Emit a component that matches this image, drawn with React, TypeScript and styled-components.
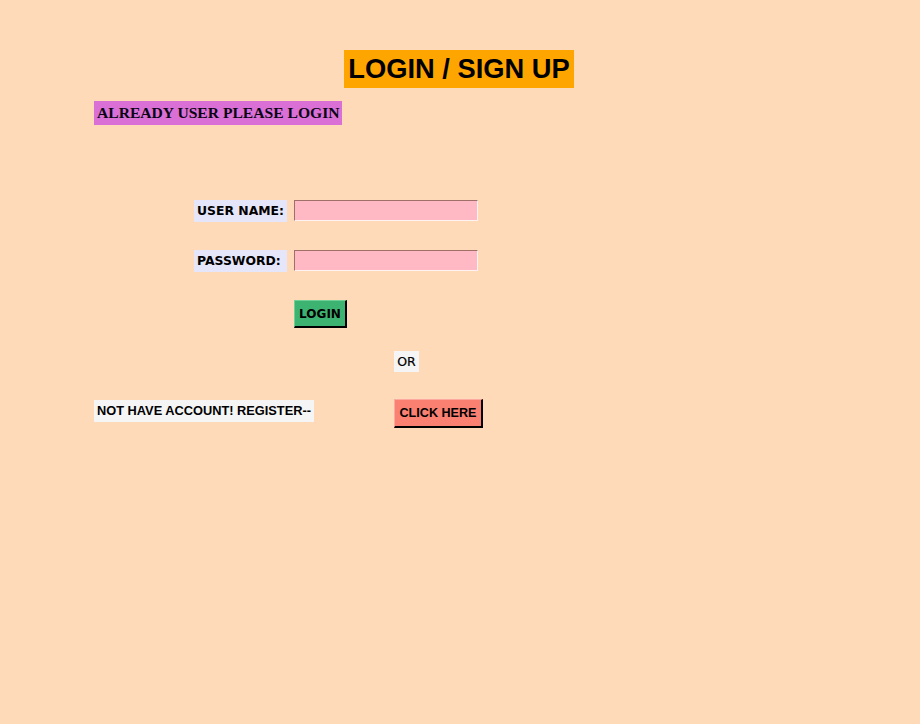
import React from "react";
import styled, { createGlobalStyle } from "styled-components";

const GlobalStyle = createGlobalStyle`
  html, body {
    margin: 0;
    padding: 0;
    background: #ffdab9;
  }
  #root {
    min-height: 100vh;
  }
`;

const Page = styled.div`
  min-height: 724px;
  background: #ffdab9;
  padding-top: 50px;
  box-sizing: border-box;
`;

const TitleRow = styled.div`
  display: flex;
  justify-content: center;
`;

const Title = styled.h1`
  margin: 0;
  background: #ffa500;
  color: #000;
  font-family: "Liberation Sans", Arial, sans-serif;
  font-weight: bold;
  font-size: 27.3px;
  line-height: 38px;
  height: 38px;
  padding: 0 4px;
  transform: translateX(-1px);
`;

const SubTitle = styled.h3`
  margin: 13px 0 0 94px;
  display: inline-block;
  background: #da70d6;
  color: #0a0514;
  font-family: "Liberation Serif", "Times New Roman", serif;
  font-weight: bold;
  font-size: 15.6px;
  line-height: 24px;
  height: 24px;
  padding: 0 3px;
`;

const FormGrid = styled.form`
  display: grid;
  grid-template-columns: 287px auto;
  column-gap: 7px;
  row-gap: 28px;
  margin-top: 75px;
  align-items: start;
  justify-items: start;
`;

const Label = styled.label`
  justify-self: end;
  background: #e6e6fa;
  color: #000;
  font-family: "DejaVu Sans", Verdana, sans-serif;
  font-weight: bold;
  font-size: 12.4px;
  line-height: 22px;
  height: 22px;
  padding: 0 3px;
  box-sizing: border-box;
  min-width: 93px;
  text-align: left;
`;

const Input = styled.input`
  width: 184px;
  height: 21px;
  box-sizing: border-box;
  background: #ffb9c5;
  margin: 0;
  padding: 0 3px;
  border-style: solid;
  border-width: 1px;
  border-color: #a07068 #fff2f2 #fff2f2 #a07068;
  outline: none;
`;

const LoginButton = styled.button`
  grid-column: 2;
  background: #3cb371;
  color: #000;
  font-family: "DejaVu Sans", Verdana, sans-serif;
  font-weight: bold;
  font-size: 12px;
  width: 53px;
  height: 28px;
  padding: 0;
  border-style: solid;
  border-width: 1px 2px 2px 1px;
  border-color: #6fcf95 #000 #000 #6fcf95;
  cursor: pointer;
`;

const Bottom = styled.div`
  display: grid;
  grid-template-columns: 300px auto;
  row-gap: 27px;
  padding-left: 94px;
  margin-top: 23px;
  align-items: start;
  justify-items: start;
`;

const Or = styled.div`
  grid-column: 2;
  background: #f5f5f5;
  font-family: "DejaVu Sans", Verdana, sans-serif;
  font-size: 12.5px;
  font-weight: 500;
  color: #000;
  width: 25px;
  height: 21px;
  line-height: 21px;
  text-align: center;
  -webkit-text-stroke: 0.2px #000;
`;

const RegisterText = styled.div`
  grid-column: 1;
  margin-top: 1px;
  background: #f5f5f5;
  font-family: "Liberation Sans", Arial, sans-serif;
  font-weight: bold;
  font-size: 12.8px;
  color: #000;
  height: 22px;
  line-height: 22px;
  padding: 0 3px;
`;

const ClickButton = styled.button`
  grid-column: 2;
  background: #fa8072;
  color: #000;
  font-family: "Liberation Sans", Arial, sans-serif;
  font-weight: bold;
  font-size: 12.6px;
  width: 89px;
  height: 29px;
  padding: 0;
  border-style: solid;
  border-width: 1px 2px 2px 1px;
  border-color: #fca99f #000 #000 #fca99f;
  cursor: pointer;
`;

export default function App() {
  return (
    <>
      <GlobalStyle />
      <Page>
        <TitleRow>
          <Title>LOGIN / SIGN UP</Title>
        </TitleRow>
        <SubTitle>ALREADY USER PLEASE LOGIN</SubTitle>
        <FormGrid onSubmit={(e) => e.preventDefault()}>
          <Label htmlFor="user">USER NAME:</Label>
          <Input id="user" type="text" />
          <Label htmlFor="pass">PASSWORD:</Label>
          <Input id="pass" type="password" />
          <LoginButton type="submit">LOGIN</LoginButton>
        </FormGrid>
        <Bottom>
          <Or>OR</Or>
          <RegisterText>NOT HAVE ACCOUNT! REGISTER--</RegisterText>
          <ClickButton type="button">CLICK HERE</ClickButton>
        </Bottom>
      </Page>
    </>
  );
}
